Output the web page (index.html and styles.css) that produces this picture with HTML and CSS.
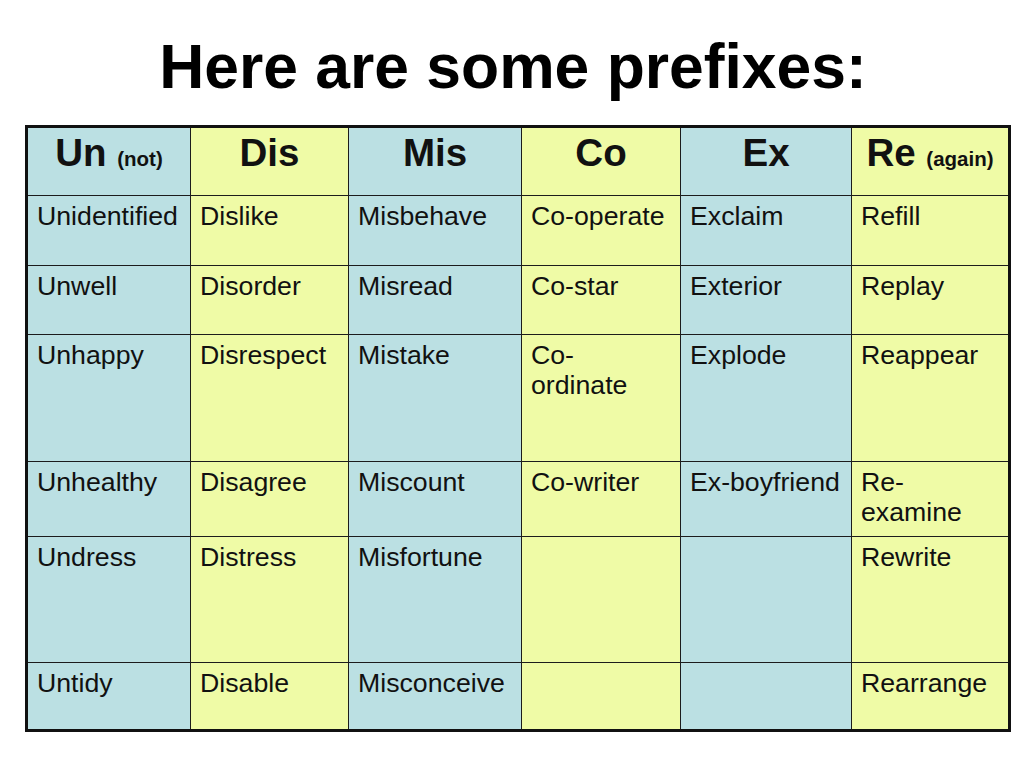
FILE: index.html
```html
<!DOCTYPE html>
<html lang="en">
<head>
<meta charset="utf-8">
<title>Prefixes</title>
<link rel="stylesheet" href="styles.css">
</head>
<body>
<main class="page">
  <h1 class="title">Here are some prefixes:</h1>
  <div class="grid">
    <div class="cell head blue">Un <small>(not)</small></div>
    <div class="cell head yellow">Dis</div>
    <div class="cell head blue">Mis</div>
    <div class="cell head yellow">Co</div>
    <div class="cell head blue">Ex</div>
    <div class="cell head yellow">Re <small>(again)</small></div>

    <div class="cell blue">Unidentified</div>
    <div class="cell yellow">Dislike</div>
    <div class="cell blue">Misbehave</div>
    <div class="cell yellow">Co-operate</div>
    <div class="cell blue">Exclaim</div>
    <div class="cell yellow">Refill</div>

    <div class="cell blue">Unwell</div>
    <div class="cell yellow">Disorder</div>
    <div class="cell blue">Misread</div>
    <div class="cell yellow">Co-star</div>
    <div class="cell blue">Exterior</div>
    <div class="cell yellow">Replay</div>

    <div class="cell blue">Unhappy</div>
    <div class="cell yellow">Disrespect</div>
    <div class="cell blue">Mistake</div>
    <div class="cell yellow">Co-<br>ordinate</div>
    <div class="cell blue">Explode</div>
    <div class="cell yellow">Reappear</div>

    <div class="cell blue">Unhealthy</div>
    <div class="cell yellow">Disagree</div>
    <div class="cell blue">Miscount</div>
    <div class="cell yellow">Co-writer</div>
    <div class="cell blue">Ex-boyfriend</div>
    <div class="cell yellow">Re-<br>examine</div>

    <div class="cell blue">Undress</div>
    <div class="cell yellow">Distress</div>
    <div class="cell blue">Misfortune</div>
    <div class="cell yellow"></div>
    <div class="cell blue"></div>
    <div class="cell yellow">Rewrite</div>

    <div class="cell blue">Untidy</div>
    <div class="cell yellow">Disable</div>
    <div class="cell blue">Misconceive</div>
    <div class="cell yellow"></div>
    <div class="cell blue"></div>
    <div class="cell yellow">Rearrange</div>
  </div>
</main>
</body>
</html>
```

FILE: styles.css
```css
html, body {
  margin: 0;
  padding: 0;
  background: #ffffff;
}

body {
  font-family: "Liberation Sans", Arial, sans-serif;
  color: #000;
  width: 1024px;
  height: 768px;
  overflow: hidden;
}

.page {
  display: flex;
  flex-direction: column;
  padding: 0 0 0 25px;
}

.title {
  margin: 31px 0 0 0;
  width: 976px;
  text-align: center;
  font-size: 62.4px;
  font-weight: bold;
  line-height: 71px;
  height: 71px;
}

.grid {
  margin-top: 23px;
  width: 980px;
  display: grid;
  grid-template-columns: 162px 157px 172px 158px 170px 156px;
  grid-template-rows: 67px 69px 68px 126px 74px 125px 66px;
  gap: 1px;
  background: #1c1c1c;
  border: 3px solid #111;
}

.cell {
  font-size: 26.7px;
  line-height: 30px;
  padding: 5px 8px 0 9px;
  color: #111;
}

.blue {
  background: #bbe0e3;
}

.yellow {
  background: #effba6;
}

.head {
  text-align: center;
  font-weight: bold;
  font-size: 38.5px;
  line-height: 42px;
  padding: 4px 0 0 0;
}

.head small {
  font-size: 20.5px;
}
```
